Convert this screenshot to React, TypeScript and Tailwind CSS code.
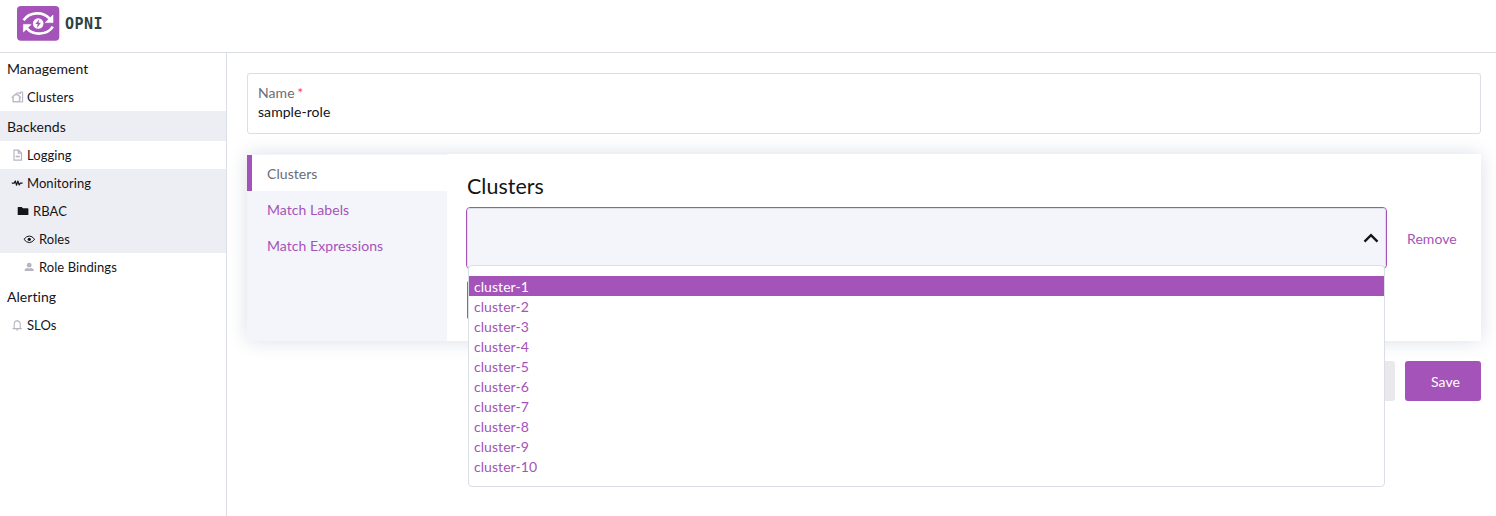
import type { ReactNode } from 'react';

const clusters = Array.from({ length: 10 }, (_, i) => `cluster-${i + 1}`);

function Logo() {
  return (
    <svg className="h-[35px] w-[43px] shrink-0" viewBox="0 0 43 35">
      <rect width="42.3" height="34.8" rx="4" fill="#a453b9" />
      <g fill="none" stroke="#fff" strokeWidth="2.7">
        <path d="M6.6 14.2C12.5 5.6 26 5.2 32.6 12.6" />
        <path d="M35.8 20.6C30.5 29.2 16.5 29.8 9.8 22.4" />
      </g>
      <path d="M36 9v7.6h-7.8z" fill="#fff" stroke="#fff" strokeWidth=".6" />
      <path d="M6.4 26v-7.6h7.8z" fill="#fff" stroke="#fff" strokeWidth=".6" />
      <circle cx="21.2" cy="17.5" r="5.3" fill="#fff" />
      <path d="M22.3 13.2l-3.9 4.9h2.3l-.7 3.8 3.9-5.1h-2.4z" fill="#a453b9" />
    </svg>
  );
}

function HomeIcon() {
  return (
    <svg className="h-3 w-3.5 shrink-0" viewBox="0 0 14 12" fill="none" stroke="#bcbcc8" strokeWidth="1.5" strokeLinejoin="round">
      <path d="M.8 6.9L3 4.4Q5.3 2.8 7.7 4.4L9.9 6.9M2.1 6.2v4.6h6.5V6.2" />
      <path d="M4.6 2.9Q7 1.2 9.4 2.6V1.2h2.2v9.6H9.2" strokeWidth="1.2" />
    </svg>
  );
}

function FileIcon() {
  return (
    <svg className="h-3 w-3 shrink-0" viewBox="0 0 12 12" fill="none" stroke="#b6b6c2" strokeWidth="1.2">
      <path d="M2 1.2h4.6l2.9 2.7v7.2H2zM6.3 1.2v3h3.2" />
      <path d="M3.6 7.5h4.2" strokeWidth="1.6" />
    </svg>
  );
}

function PulseIcon() {
  return (
    <svg className="h-3 w-3 shrink-0" viewBox="0 0 12 12" fill="none" stroke="#141419" strokeWidth="1.2" strokeLinejoin="round">
      <path d="M.8 6.2h2.4L4.3 4l1.2 4.2L6.9 4 8.2 8l1-1.8h2.4" />
    </svg>
  );
}

function FolderIcon() {
  return (
    <svg className="h-3 w-3 shrink-0" viewBox="0 0 12 12" fill="#141419">
      <path d="M.7 2.6q0-.6.6-.6h3.4l1.2 1.3h4.9q.6 0 .6.6v5.6q0 .5-.6.5H1.3q-.6 0-.6-.5z" />
    </svg>
  );
}

function EyeIcon() {
  return (
    <svg className="h-3 w-3 shrink-0" viewBox="0 0 12 12" fill="none" stroke="#141419" strokeWidth="1">
      <path d="M.9 6.3Q6.3-.3 11.7 6.3 6.3 12.9.9 6.3z" />
      <circle cx="6.3" cy="6.3" r="1.6" fill="#141419" stroke="none" />
    </svg>
  );
}

function UserIcon() {
  return (
    <svg className="h-3 w-3 shrink-0" viewBox="0 0 12 12" fill="#b6b6c2">
      <circle cx="6.2" cy="4.2" r="2.4" />
      <path d="M1.6 10V8.9Q1.6 7.4 4.2 7l2 .5 2-.5q2.6.4 2.6 1.9V10z" />
    </svg>
  );
}

function BellIcon() {
  return (
    <svg className="h-3 w-3 shrink-0" viewBox="0 0 12 12" fill="none" stroke="#b6b6c2" strokeWidth="1.1">
      <path d="M.7 9.6h9M2.2 9.5V5.2q0-3.3 3-3.3t3 3.3v4.3M4.2 11h2M5.2 1v1" />
    </svg>
  );
}

function Group({ label, active }: { label: string; active?: boolean }) {
  return (
    <div className={`flex h-[30px] items-center pt-px pl-[7px] text-[14px] leading-[18px] ${active ? 'bg-[#edeef4]' : ''}`}>
      {label}
    </div>
  );
}

function Item({ label, icon, pad, active }: { label: string; icon: ReactNode; pad: string; active?: boolean }) {
  return (
    <div className={`flex h-7 items-center text-[13px] leading-[18px] ${pad} ${active ? 'bg-[#edeef4]' : ''}`}>
      {icon}
      <span>{label}</span>
    </div>
  );
}

export default function App() {
  return (
    <div className="flex h-[516px] w-[1496px] flex-col overflow-hidden bg-white font-['Lato',sans-serif] text-[14px] tracking-[0.06px] text-[#141419]">
      <header className="flex h-[53px] shrink-0 items-start border-b border-[#dcdee7] pt-1.5 pl-[17px]">
        <Logo />
        <span className="ml-[5px] pt-2 font-['DejaVu_Sans_Mono',monospace] text-[15px] leading-5 font-bold tracking-[0.5px] text-[#2c4241]">OPNI</span>
      </header>
      <div className="flex min-h-0 grow">
        <nav className="w-[227px] shrink-0 border-r border-[#dcdee7]">
          <Group label="Management" />
          <Item label="Clusters" icon={<HomeIcon />} pad="pl-[11px] gap-0.5" />
          <Group label="Backends" active />
          <Item label="Logging" icon={<FileIcon />} pad="pl-3 gap-[3px]" />
          <Item label="Monitoring" icon={<PulseIcon />} pad="pl-[11px] gap-1" active />
          <Item label="RBAC" icon={<FolderIcon />} pad="pl-[17px] gap-1" active />
          <Item label="Roles" icon={<EyeIcon />} pad="pl-[23px] gap-1" active />
          <Item label="Role Bindings" icon={<UserIcon />} pad="pl-[23px] gap-1" />
          <Group label="Alerting" />
          <Item label="SLOs" icon={<BellIcon />} pad="pl-3 gap-[3px]" />
        </nav>
        <main className="flex grow flex-col gap-5 py-5 pr-[15px] pl-5">
          <div className="h-[61px] shrink-0 rounded-[3px] border border-[#dcdee7] px-2.5 pt-[9px] leading-[19px]">
            <div className="text-[#6c6c76]">
              Name <span className="-ml-px text-[#f64747]">*</span>
            </div>
            <div>sample-role</div>
          </div>
          <section className="flex h-[187px] shrink-0 rounded-[4px] shadow-[0_0_20px_#dcdee7]">
            <ul className="w-[200px] shrink-0 rounded-bl-[4px] bg-[#f4f5fa] pt-px text-[#a453b9]">
              <li className="flex h-9 items-center border-l-[5px] border-[#a453b9] bg-white pl-[15px] text-[#6c6c76]">Clusters</li>
              <li className="flex h-9 items-center pl-5">Match Labels</li>
              <li className="flex h-9 items-center pl-5">Match Expressions</li>
            </ul>
            <div className="flex grow flex-col bg-white pt-5 pl-[19px]">
              <h1 className="pl-px text-[21.4px] leading-[25px]">Clusters</h1>
              <div className="mt-2 flex items-center">
                <div className="relative h-[62px] w-[921px] rounded-[4px] border border-[#a453b9]">
                  <div className="flex h-full items-center justify-end rounded-[3px] border border-[#dcdee7] bg-[#f4f5fa] pr-1.5">
                    <svg className="h-4 w-4" viewBox="0 0 16 16" fill="none" stroke="#141419" strokeWidth="2.4">
                      <path d="M1.5 11.6L8 5.2l6.5 6.4" />
                    </svg>
                  </div>
                  <ul className="absolute top-[57px] left-px z-10 h-[222px] w-[917px] rounded-[4px] border border-[#dcdee7] bg-white py-2.5 text-[#a453b9]">
                    {clusters.map((name, i) => (
                      <li key={name} className={`h-5 pt-px pl-[5px] leading-5 ${i === 0 ? 'bg-[#a453b9] text-white' : ''}`}>
                        {name}
                      </li>
                    ))}
                  </ul>
                </div>
                <button className="ml-5 text-[#a453b9]">Remove</button>
              </div>
              <div className="mt-[11px] ml-px h-10 w-24 rounded-[3px] border border-[#a453b9]" />
            </div>
          </section>
          <div className="flex justify-end gap-2.5">
            <div className="h-10 w-[90px] rounded-[3px] bg-[#e9e8ed]" />
            <button className="h-10 w-[76px] rounded-[3px] bg-[#a453b9] pl-[5px] text-white">Save</button>
          </div>
        </main>
      </div>
    </div>
  );
}
